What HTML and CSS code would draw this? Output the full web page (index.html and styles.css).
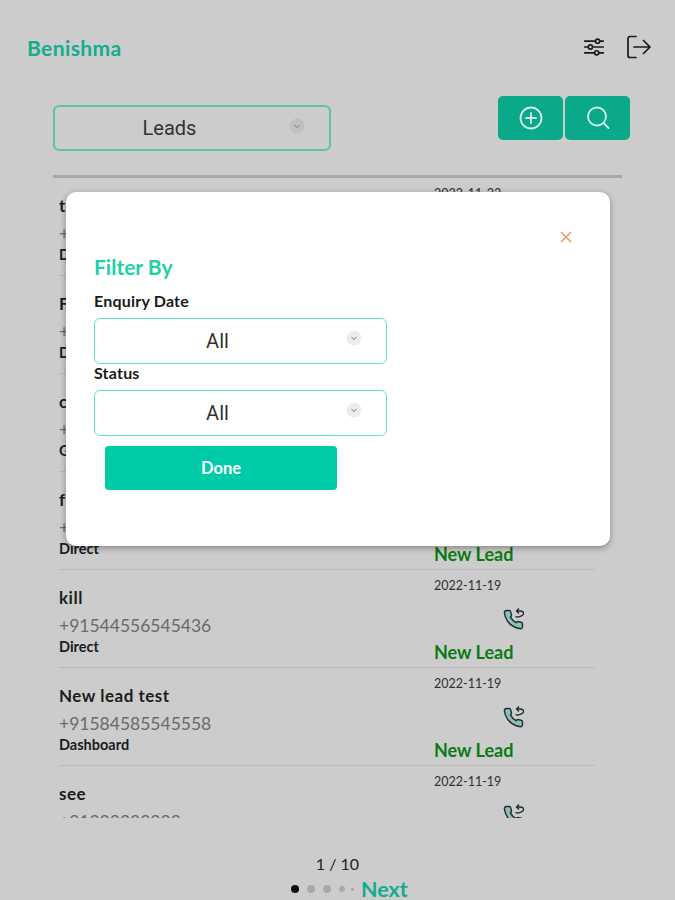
FILE: index.html
```html
<!DOCTYPE html>
<html lang="en">
  <head>
    <meta charset="UTF-8" />
    <meta name="viewport" content="width=device-width, initial-scale=1.0" />
    <title>Benishma Leads</title>
    <link rel="stylesheet" href="styles.css">
  </head>
  <body>
    <svg class="sprite" width="0" height="0">
      <symbol id="call" viewBox="0 0 24 24">
        <path class="call__hand" d="M20.500 17.500v2.200a2 2 0 0 1-2.200 2 17.500 17.500 0 0 1-7.800-2.800 17 17 0 0 1-5.300-5.300A17.500 17.500 0 0 1 2.400 5.800 2 2 0 0 1 4.400 3.500H7a1.800 1.800 0 0 1 1.800 1.500c.1.900.3 1.700.6 2.400a1.800 1.800 0 0 1-.4 1.900l-.6.6a13 13 0 0 0 5.800 5.800l.6-.6a1.800 1.800 0 0 1 1.900-.4c.8.300 1.600.500 2.400.6a1.800 1.800 0 0 1 1.400 1.700z"/>
        <path class="call__arrow" d="M13.500 9.500c2 1 3 .5 4.500 0s3.500-1 3.500-3-2-2.500-3.500-2.500H15m2-2.500L14.500 4l2.500 2.500"/>
      </symbol>
      <symbol id="chevron" viewBox="0 0 16 16">
        <circle cx="8" cy="8" r="7.500" class="chevron__dot"/>
        <path d="M5.500 7l2.500 2.500L10.500 7" class="chevron__line"/>
      </symbol>
    </svg>

    <div class="page">
      <!-- header -->
      <header class="header">
        <span class="header__name">Benishma</span>
        <div class="header__icons">
          <svg class="icon-sliders" viewBox="0 0 24 20">
            <path d="M1 3.500h22M1 10h22M1 16.500h22"/>
            <circle cx="16" cy="3.500" r="2.300"/>
            <circle cx="8" cy="10" r="2.300"/>
            <circle cx="15" cy="16.500" r="2.300"/>
          </svg>
          <svg class="icon-logout" viewBox="0 0 24 24">
            <path d="M9 1.500H3a2 2 0 0 0-2 2v17a2 2 0 0 0 2 2h6M7 12h16M16.500 5.500 23 12l-6.500 6.500"/>
          </svg>
        </div>
      </header>

      <!-- toolbar -->
      <div class="toolbar">
        <div class="select select--lead">
          <span class="select__value">Leads</span>
          <svg class="select__chevron"><use href="#chevron"/></svg>
        </div>
        <div class="toolbar__btns">
          <button class="square-btn">
            <svg viewBox="0 0 24 24"><circle cx="12" cy="12" r="10.500"/><path d="M12 7v10M7 12h10"/></svg>
          </button>
          <button class="square-btn">
            <svg viewBox="0 0 24 24"><circle cx="11" cy="10.500" r="9"/><path d="M17.500 17l5 5"/></svg>
          </button>
        </div>
      </div>

      <div class="divider"></div>

      <!-- leads list -->
      <div class="list">
        <div class="row">
          <div class="row__left">
            <div class="row__name">test</div>
            <div class="row__phone">+91987654321</div>
            <div class="row__source">Dashboard</div>
          </div>
          <div class="row__right">
            <div class="row__date">2022-11-22</div>
            <svg class="row__call"><use href="#call"/></svg>
            <div class="row__status">New Lead</div>
          </div>
        </div>
        <div class="row">
          <div class="row__left">
            <div class="row__name">Fresh</div>
            <div class="row__phone">+91987654322</div>
            <div class="row__source">Dashboard</div>
          </div>
          <div class="row__right">
            <div class="row__date">2022-11-21</div>
            <svg class="row__call"><use href="#call"/></svg>
            <div class="row__status">New Lead</div>
          </div>
        </div>
        <div class="row">
          <div class="row__left">
            <div class="row__name">call</div>
            <div class="row__phone">+91987654323</div>
            <div class="row__source">Google</div>
          </div>
          <div class="row__right">
            <div class="row__date">2022-11-20</div>
            <svg class="row__call"><use href="#call"/></svg>
            <div class="row__status">New Lead</div>
          </div>
        </div>
        <div class="row">
          <div class="row__left">
            <div class="row__name">first</div>
            <div class="row__phone">+91987654324</div>
            <div class="row__source">Direct</div>
          </div>
          <div class="row__right">
            <div class="row__date">2022-11-19</div>
            <svg class="row__call"><use href="#call"/></svg>
            <div class="row__status">New Lead</div>
          </div>
        </div>
        <div class="row">
          <div class="row__left">
            <div class="row__name">kill</div>
            <div class="row__phone">+91544556545436</div>
            <div class="row__source">Direct</div>
          </div>
          <div class="row__right">
            <div class="row__date">2022-11-19</div>
            <svg class="row__call"><use href="#call"/></svg>
            <div class="row__status">New Lead</div>
          </div>
        </div>
        <div class="row">
          <div class="row__left">
            <div class="row__name">New lead test</div>
            <div class="row__phone">+91584585545558</div>
            <div class="row__source">Dashboard</div>
          </div>
          <div class="row__right">
            <div class="row__date">2022-11-19</div>
            <svg class="row__call"><use href="#call"/></svg>
            <div class="row__status">New Lead</div>
          </div>
        </div>
        <div class="row">
          <div class="row__left">
            <div class="row__name">see</div>
            <div class="row__phone">+91222222222</div>
            <div class="row__source">Direct</div>
          </div>
          <div class="row__right">
            <div class="row__date">2022-11-19</div>
            <svg class="row__call"><use href="#call"/></svg>
            <div class="row__status">New Lead</div>
          </div>
        </div>
      </div>

      <!-- pager -->
      <footer class="pager">
        <div class="pager__count">1 / 10</div>
        <div class="pager__nav">
          <span class="dot dot--on"></span>
          <span class="dot"></span>
          <span class="dot"></span>
          <span class="dot dot--small"></span>
          <span class="dot dot--tiny"></span>
          <span class="pager__next">Next</span>
        </div>
      </footer>

      <!-- filter popup -->
      <div class="modal">
        <div class="modal__top">
          <svg class="modal__close" viewBox="0 0 12 12"><path d="M1 1l10 10M11 1L1 11"/></svg>
        </div>
        <h2 class="modal__title">Filter By</h2>
        <div class="modal__form">
          <label class="modal__label">Enquiry Date</label>
          <div class="select select--modal">
            <span class="select__value">All</span>
            <svg class="select__chevron"><use href="#chevron"/></svg>
          </div>
          <label class="modal__label">Status</label>
          <div class="select select--modal">
            <span class="select__value">All</span>
            <svg class="select__chevron"><use href="#chevron"/></svg>
          </div>
        </div>
        <button class="modal__done">Done</button>
      </div>
    </div>
  </body>
</html>
```

FILE: styles.css
```css
body {
  margin: 0;
  font-family: "Lato", "Open Sans", sans-serif;
  background-color: #cccccc;
  color: #111;
}
.sprite {
  position: absolute;
}
.page {
  position: relative;
  width: 675px;
  height: 900px;
  overflow: hidden;
}

/* header */
.header {
  display: flex;
  justify-content: space-between;
  align-items: center;
  height: 24px;
  padding: 35px 24px 0 27px;
}
.header__name {
  font-size: 21px;
  font-weight: 700;
  letter-spacing: 0.4px;
  color: #12ad8e;
}
.header__icons {
  display: flex;
  align-items: center;
  gap: 22px;
}
.icon-sliders {
  width: 22px;
  height: 18px;
  fill: #ccc;
  stroke: #1a1a1a;
  stroke-width: 1.8;
}
.icon-logout {
  width: 24px;
  height: 24px;
  fill: none;
  stroke: #1a1a1a;
  stroke-width: 1.7;
  stroke-linecap: round;
  stroke-linejoin: round;
}

/* toolbar */
.toolbar {
  display: flex;
  justify-content: space-between;
  align-items: flex-start;
  width: 577px;
  height: 54px;
  margin: 37px 0 0 53px;
}
.toolbar__btns {
  display: flex;
  gap: 2px;
}
.square-btn {
  display: flex;
  align-items: center;
  justify-content: center;
  width: 65px;
  height: 44px;
  padding: 0;
  border: none;
  border-radius: 5px;
  background-color: #0aa98a;
}
.square-btn svg {
  width: 24px;
  height: 24px;
  fill: none;
  stroke: #d6efe9;
  stroke-width: 1.8;
  stroke-linecap: round;
}

/* dropdowns */
.select {
  display: flex;
  align-items: center;
  justify-content: center;
  position: relative;
  box-sizing: border-box;
  height: 46px;
  border-radius: 6px;
  font-family: "Roboto", sans-serif;
  font-size: 20px;
  color: #333;
}
.select--lead {
  width: 278px;
  margin-top: 9px;
  border: 2px solid #62c0aa;
  padding-right: 45px;
  --dot: #c0c0c0;
}
.select--modal {
  width: 293px;
  border: 1.5px solid #5ee3c6;
  padding-right: 46px;
}
.select__chevron {
  position: absolute;
  right: 24px;
  top: 11px;
  width: 16px;
  height: 16px;
}
.chevron__dot {
  fill: var(--dot, #ececec);
}
.chevron__line {
  fill: none;
  stroke: #777;
  stroke-width: 1;
}

.divider {
  width: 569px;
  height: 3px;
  margin: 25px 0 0 53px;
  background-color: #a8a8a8;
}

/* list */
.list {
  width: 536px;
  height: 640px;
  margin-left: 59px;
  overflow: hidden;
}
.row {
  display: flex;
  justify-content: space-between;
  box-sizing: border-box;
  height: 98px;
  border-bottom: 1px solid #bbbbbb;
}
.row__left {
  padding-top: 17px;
}
.row__name {
  height: 22px;
  line-height: 22px;
  font-size: 17px;
  font-weight: 700;
  letter-spacing: 0.5px;
  color: #1c1c1c;
}
.row__phone {
  height: 22px;
  margin-top: 6px;
  line-height: 22px;
  font-size: 17.5px;
  color: #6a6a6a;
}
.row__source {
  height: 18px;
  margin-top: 1px;
  line-height: 18px;
  font-size: 14.5px;
  font-weight: 700;
  color: #1c1c1c;
}
.row__right {
  width: 161px;
  padding-top: 8px;
}
.row__date {
  height: 16px;
  line-height: 16px;
  font-size: 12.5px;
  color: #2c3138;
}
.row__call {
  display: block;
  width: 24px;
  height: 24px;
  margin: 13px 0 0 68px;
}
.call__hand {
  fill: #8dbfb2;
  stroke: #1c2c33;
  stroke-width: 1.4;
}
.call__arrow {
  fill: none;
  stroke: #1c2c33;
  stroke-width: 1.3;
}
.row__status {
  height: 22px;
  margin-top: 10px;
  line-height: 22px;
  font-size: 18px;
  font-weight: 700;
  color: #0a7a12;
}

/* pager */
.pager {
  padding-top: 36px;
  text-align: center;
}
.pager__count {
  height: 20px;
  line-height: 20px;
  font-size: 16px;
  color: #222;
}
.pager__nav {
  display: flex;
  align-items: center;
  height: 22px;
  margin-top: 4px;
  padding-left: 291px;
}
.dot {
  flex: none;
  width: 8px;
  height: 8px;
  margin-right: 8px;
  border-radius: 50%;
  background-color: #a9a9a9;
}
.dot--on {
  background-color: #0c0c0c;
}
.dot--small {
  width: 6px;
  height: 6px;
  margin-right: 6px;
}
.dot--tiny {
  width: 3px;
  height: 3px;
  margin-right: 7px;
}
.pager__next {
  font-size: 21.5px;
  font-weight: 700;
  color: #12ad8e;
}

/* popup */
.modal {
  position: absolute;
  left: 66px;
  top: 192px;
  box-sizing: border-box;
  width: 544px;
  height: 354px;
  padding: 0 28px;
  background-color: #fff;
  border-radius: 10px;
  box-shadow: 0 2px 6px rgba(0, 0, 0, 0.35);
}
.modal__top {
  display: flex;
  justify-content: flex-end;
  padding: 39px 10px 0 0;
}
.modal__close {
  width: 12px;
  height: 12px;
  fill: none;
  stroke: #f59468;
  stroke-width: 1.5;
}
.modal__title {
  margin: 12px 0 0;
  height: 24px;
  line-height: 24px;
  font-size: 21px;
  font-weight: 700;
  color: #1fd0a8;
}
.modal__form {
  display: flex;
  flex-direction: column;
  margin-top: 13px;
}
.modal__label {
  height: 18px;
  margin-bottom: 8px;
  line-height: 18px;
  font-size: 16px;
  font-weight: 700;
  letter-spacing: 0.2px;
  color: #1a1a1a;
}
.modal__done {
  display: block;
  width: 232px;
  height: 44px;
  margin: 10px 0 0 11px;
  border: none;
  border-radius: 4px;
  background-color: #00cba8;
  font-family: "Lato", sans-serif;
  font-size: 16.5px;
  font-weight: 700;
  color: #fff;
}
```
